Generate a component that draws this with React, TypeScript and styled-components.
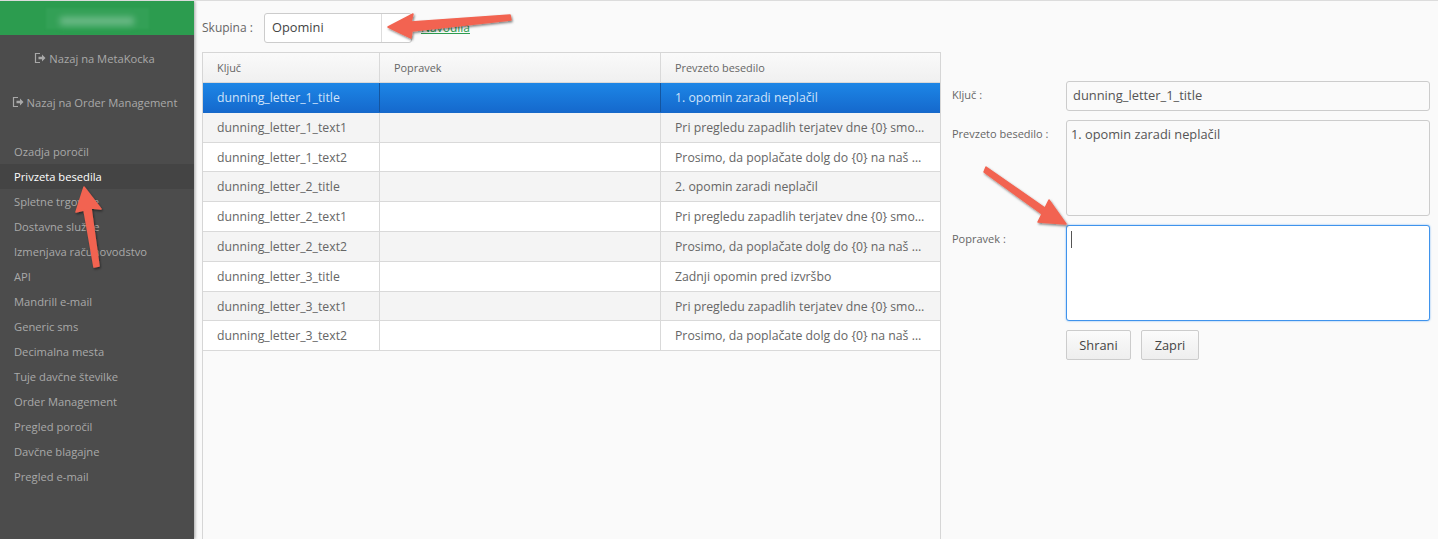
import React from "react";
import styled, { createGlobalStyle } from "styled-components";

const GlobalStyle = createGlobalStyle`
  html, body {
    margin: 0;
    height: 100%;
    overflow: hidden;
    background: #fafafa;
    font-family: "Open Sans", "Liberation Sans", sans-serif;
  }
  * { box-sizing: border-box; }
`;

const Page = styled.div`
  position: relative;
  display: flex;
  width: 1438px;
  height: 539px;
  overflow: hidden;
  border-top: 1px solid #dcdcdc;
`;

const Sidebar = styled.nav`
  width: 194px;
  flex: none;
  background: #4c4c4c;
  box-shadow: 1px 0 3px rgba(0, 0, 0, 0.35);
`;

const Brand = styled.div`
  height: 34px;
  display: flex;
  align-items: center;
  justify-content: center;
  background: #2c9c4f;
`;

const BlurPatch = styled.div`
  width: 103px;
  height: 21px;
  display: flex;
  align-items: center;
  justify-content: center;
  padding-top: 5px;
  background: #33a056;
  filter: blur(1px);
`;

const BlurredName = styled.div`
  width: 74px;
  height: 8px;
  background: #6fbb8a;
  filter: blur(3px);
`;

const BackLinks = styled.div`
  display: flex;
  flex-direction: column;
  gap: 26px;
  padding: 14px 5px 0 0;
`;

const BackLink = styled.a`
  display: flex;
  align-items: center;
  justify-content: center;
  gap: 3px;
  height: 18px;
  font-size: 11.2px;
  color: #a9a9a9;
`;

const Menu = styled.ul`
  list-style: none;
  margin: 28px 0 0;
  padding: 0;
`;

const MenuItem = styled.li<{ $active?: boolean }>`
  height: 25px;
  line-height: 25px;
  padding-left: 14px;
  font-size: 11.2px;
  color: ${(p) => (p.$active ? "#ffffff" : "#a9a9a9")};
  background: ${(p) => (p.$active ? "#444444" : "transparent")};
`;

const Main = styled.main`
  flex: 1;
  display: flex;
  padding-left: 8px;
  min-width: 0;
`;

const LeftColumn = styled.section`
  width: 739px;
  flex: none;
  display: flex;
  flex-direction: column;
`;

const Toolbar = styled.div`
  height: 51px;
  display: flex;
  align-items: center;
  padding-top: 2px;
`;

const GroupLabel = styled.label`
  width: 62px;
  font-size: 12px;
  color: #666;
`;

const Select = styled.div`
  width: 148px;
  height: 30px;
  display: flex;
  background: #fff;
  border: 1px solid #ccc;
  border-radius: 3px;
  font-size: 12.8px;
  line-height: 27px;
  color: #444;
`;

const SelectValue = styled.span`
  width: 117px;
  padding-left: 7px;
  border-right: 1px solid #ddd;
`;

const HelpLink = styled.a`
  margin-left: 9px;
  font-size: 12px;
  color: #2c9c4f;
  text-decoration: underline;
`;

const Grid = styled.div`
  flex: 1;
  background: #fafafa;
  border: 1px solid #d6d6d6;
  border-bottom: none;
`;

const Row = styled.div<{ $kind: "head" | "odd" | "even" | "selected" }>`
  display: grid;
  grid-template-columns: 177px 281px 1fr;
  height: ${(p) => (p.$kind === "head" ? "30px" : "29.8px")};
  border-bottom: 1px solid ${(p) => (p.$kind === "selected" ? "#1769c9" : "#d9d9d9")};
  color: ${(p) => (p.$kind === "selected" ? "#cfe3fa" : "#666666")};
  background: ${(p) =>
    p.$kind === "head"
      ? "linear-gradient(#fafafa, #f0f0f0)"
      : p.$kind === "selected"
        ? "linear-gradient(#1d86e6, #1569cd)"
        : p.$kind === "odd"
          ? "#f4f4f4"
          : "#ffffff"};
`;

const Cell = styled.div<{ $head?: boolean; $selected?: boolean }>`
  padding-left: 14px;
  padding-right: 15px;
  border-right: 1px solid ${(p) => (p.$selected ? "#14559f" : "#d9d9d9")};
  font-size: ${(p) => (p.$head ? "10.9px" : "12.25px")};
  line-height: ${(p) => (p.$head ? "29px" : "30px")};
  white-space: nowrap;
  overflow: hidden;
  text-overflow: ellipsis;

  &:last-child {
    border-right: none;
  }
`;

const FormPanel = styled.form`
  flex: 1;
  display: grid;
  grid-template-columns: 114px 364px;
  grid-auto-rows: min-content;
  row-gap: 9px;
  padding: 80px 0 0 11px;
  align-content: start;
`;

const FieldLabel = styled.label`
  font-size: 11px;
  color: #666;
  padding-top: 6px;
`;

const TextInput = styled.div`
  height: 30px;
  padding-left: 6px;
  background: #fafafa;
  border: 1px solid #ccc;
  border-radius: 3px;
  font-size: 12.9px;
  line-height: 27px;
  color: #555;
`;

const TextArea = styled.div<{ $focused?: boolean }>`
  height: 96px;
  padding: 3px 4px;
  font-size: 12.8px;
  line-height: 20px;
  color: #555;
  border-radius: 3px;
  background: ${(p) => (p.$focused ? "#ffffff" : "#fafafa")};
  border: 1px solid ${(p) => (p.$focused ? "#3f93ec" : "#ccc")};
  box-shadow: ${(p) => (p.$focused ? "0 0 2px #6fb0f2" : "none")};
`;

const Caret = styled.div`
  width: 1px;
  height: 17px;
  margin-top: 2px;
  background: #555;
`;

const Buttons = styled.div`
  grid-column: 2;
  display: flex;
  gap: 10px;
`;

const Button = styled.button<{ $w: number }>`
  width: ${(p) => p.$w}px;
  height: 30px;
  padding: 0;
  font-family: inherit;
  font-size: 12.8px;
  color: #444;
  border: 1px solid #ccc;
  border-radius: 2px;
  background: linear-gradient(#fbfbfb, #eeeeee);
`;

const Annotation = styled.svg`
  position: absolute;
  left: 0;
  top: -1px;
  pointer-events: none;
`;

const ExitIcon = () => (
  <svg width="12" height="12" viewBox="0 0 12 12" fill="none">
    <path d="M6 1.5H1.5v9H6" stroke="#a9a9a9" strokeWidth="1.2" />
    <path d="M4.5 4.7H8V2.6L11.5 6 8 9.4V7.3H4.5z" fill="#a9a9a9" />
  </svg>
);

const rows: [string, string][] = [
  ["dunning_letter_1_title", "1. opomin zaradi neplačil"],
  ["dunning_letter_1_text1", "Pri pregledu zapadlih terjatev dne {0} smo ugotovili"],
  ["dunning_letter_1_text2", "Prosimo, da poplačate dolg do {0} na naš račun odprt"],
  ["dunning_letter_2_title", "2. opomin zaradi neplačil"],
  ["dunning_letter_2_text1", "Pri pregledu zapadlih terjatev dne {0} smo ugotovili"],
  ["dunning_letter_2_text2", "Prosimo, da poplačate dolg do {0} na naš račun odprt"],
  ["dunning_letter_3_title", "Zadnji opomin pred izvršbo"],
  ["dunning_letter_3_text1", "Pri pregledu zapadlih terjatev dne {0} smo ugotovili"],
  ["dunning_letter_3_text2", "Prosimo, da poplačate dolg do {0} na naš račun odprt"],
];

const menu = [
  "Ozadja poročil",
  "Privzeta besedila",
  "Spletne trgovine",
  "Dostavne službe",
  "Izmenjava računovodstvo",
  "API",
  "Mandrill e-mail",
  "Generic sms",
  "Decimalna mesta",
  "Tuje davčne številke",
  "Order Management",
  "Pregled poročil",
  "Davčne blagajne",
  "Pregled e-mail",
];

export default function App() {
  return (
    <Page>
      <GlobalStyle />
      <Sidebar>
        <Brand>
          <BlurPatch>
            <BlurredName />
          </BlurPatch>
        </Brand>
        <BackLinks>
          <BackLink>
            <ExitIcon /> Nazaj na MetaKocka
          </BackLink>
          <BackLink>
            <ExitIcon /> Nazaj na Order Management
          </BackLink>
        </BackLinks>
        <Menu>
          {menu.map((m) => (
            <MenuItem key={m} $active={m === "Privzeta besedila"}>
              {m}
            </MenuItem>
          ))}
        </Menu>
      </Sidebar>
      <Main>
        <LeftColumn>
          <Toolbar>
            <GroupLabel>Skupina :</GroupLabel>
            <Select>
              <SelectValue>Opomini</SelectValue>
            </Select>
            <HelpLink>Navodila</HelpLink>
          </Toolbar>
          <Grid>
            <Row $kind="head">
              <Cell $head>Ključ</Cell>
              <Cell $head>Popravek</Cell>
              <Cell $head>Prevzeto besedilo</Cell>
            </Row>
            {rows.map(([key, text], i) => (
              <Row key={key} $kind={i === 0 ? "selected" : i % 2 ? "odd" : "even"}>
                <Cell $selected={i === 0}>{key}</Cell>
                <Cell $selected={i === 0} />
                <Cell>{text}</Cell>
              </Row>
            ))}
          </Grid>
        </LeftColumn>
        <FormPanel>
          <FieldLabel>Ključ :</FieldLabel>
          <TextInput>dunning_letter_1_title</TextInput>
          <FieldLabel>Prevzeto besedilo :</FieldLabel>
          <TextArea>1. opomin zaradi neplačil</TextArea>
          <FieldLabel>Popravek :</FieldLabel>
          <TextArea $focused>
            <Caret />
          </TextArea>
          <Buttons>
            <Button type="button" $w={65}>Shrani</Button>
            <Button type="button" $w={58}>Zapri</Button>
          </Buttons>
        </FormPanel>
      </Main>
      <Annotation width="1438" height="539" viewBox="0 0 1438 539">
        <defs>
          <filter id="arrowShadow" x="-20%" y="-20%" width="140%" height="140%">
            <feDropShadow dx="1" dy="1.5" stdDeviation="1" floodColor="#000" floodOpacity="0.5" />
          </filter>
        </defs>
        <g fill="#f26451" stroke="#f26451" strokeLinejoin="round" filter="url(#arrowShadow)">
          <path d="M388 27 L413 14 L411 22 L510 15 L511 20 L412 31 L411 38 Z" strokeWidth="1.5" />
          <path d="M99 266 L91 208 L101 209 L84 187 L76 212 L84 210 L94 267 Z" strokeWidth="1.5" />
          <path d="M986 167 L1045 208 L1049 200 L1066 224 L1038 222 L1042 214 L984 172 Z" strokeWidth="1.5" />
        </g>
      </Annotation>
    </Page>
  );
}
